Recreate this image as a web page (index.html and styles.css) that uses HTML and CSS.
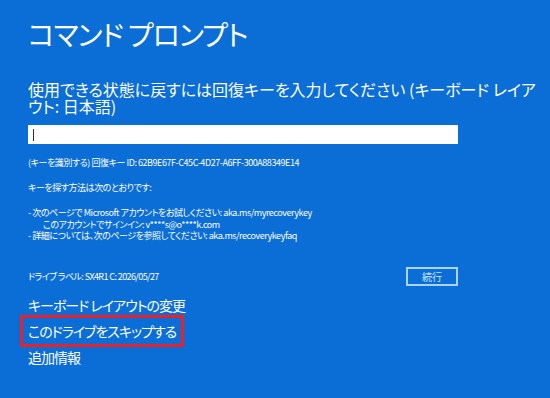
FILE: index.html
```html
<!DOCTYPE html>
<html lang="ja">
<head>
  <meta charset="UTF-8">
  <title>コマンド プロンプト</title>
  <link rel="stylesheet" href="styles.css">
</head>
<body>
  <div class="screen">
    <h1 class="title">コマンド プロンプト</h1>
    <p class="prompt">使用できる状態に戻すには回復キーを入力してください (キーボード レイアウト: 日本語)</p>
    <div class="key-input"><span class="caret"></span></div>

    <div class="info">
      <p>(キーを識別する) 回復キー ID: 62B9E67F-C45C-4D27-A6FF-300A88349E14</p>
      <p>キーを探す方法は次のとおりです:</p>
      <ul class="hints">
        <li>- 次のページで Microsoft アカウントをお試しください: aka.ms/myrecoverykey</li>
        <li class="indent">このアカウントでサインイン: v****s@o****k.com</li>
        <li>- 詳細については、次のページを参照してください: aka.ms/recoverykeyfaq</li>
      </ul>
    </div>

    <div class="drive-row">
      <span class="drive-label">ドライブ ラベル: SX4R1 C: 2026/05/27</span>
      <button class="button">続行</button>
    </div>

    <div class="links">
      <div class="link">キーボード レイアウトの変更</div>
      <div class="link highlighted">このドライブをスキップする</div>
      <div class="link">追加情報</div>
    </div>
  </div>
</body>
</html>
```

FILE: styles.css
```css
body {
  margin: 0;
  background-color: #0b6ed6;
  color: #fff;
  font-family: "Noto Sans CJK JP", "Noto Sans", sans-serif;
  font-feature-settings: "palt";
}
.screen {
  padding: 14px 0 0 28px;
  width: 514px;
}
.title {
  margin: 0;
  font-size: 28px;
  font-weight: 400;
  letter-spacing: -1px;
  line-height: 40px;
}
.prompt {
  margin: 27px 0 0;
  font-size: 16px;
  line-height: 17px;
}
.key-input {
  margin-top: 10px;
  width: 430px;
  height: 19px;
  background-color: #fff;
  display: flex;
  align-items: center;
  padding-left: 5px;
  box-sizing: border-box;
}
.caret {
  width: 1px;
  height: 12px;
  background-color: #333;
}
.info {
  margin-top: 13px;
  font-size: 9px;
  letter-spacing: -0.45px;
  line-height: 11px;
}
.info p {
  margin: 0 0 14px;
}
.hints {
  list-style: none;
  margin: 0;
  padding: 0;
  line-height: 11.5px;
}
.hints .indent {
  padding-left: 15px;
}
.drive-row {
  margin-top: 25px;
  width: 430px;
  display: flex;
  justify-content: space-between;
  align-items: center;
  font-size: 9px;
  letter-spacing: -0.6px;
}
.button {
  width: 52px;
  height: 19px;
  padding: 0;
  background: transparent;
  border: 2px solid #a9d4ff;
  color: #cfe6ff;
  font-family: inherit;
  font-size: 10px;
}
.links {
  margin-top: 6px;
  margin-left: -5px;
  display: flex;
  flex-direction: column;
  align-items: flex-start;
}
.link {
  padding: 0 5px;
  font-size: 14px;
  letter-spacing: -1px;
  line-height: 26px;
}
.highlighted {
  outline: 3px solid #e8222b;
}
```
